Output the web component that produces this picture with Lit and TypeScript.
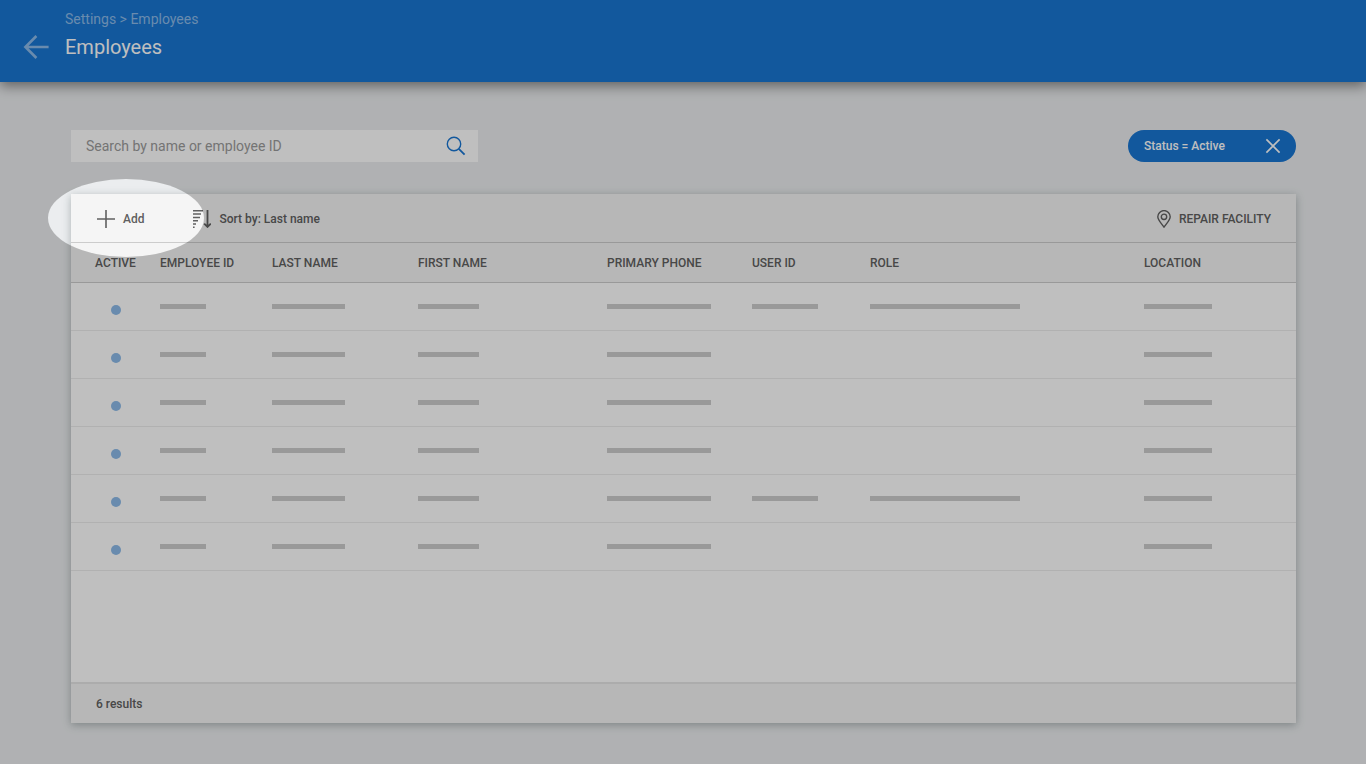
import { LitElement, html, css, svg } from "lit";
import { customElement, state } from "lit/decorators.js";
import { classMap } from "lit/directives/class-map.js";

interface Column {
  key: string;
  label: string;
}

interface Employee {
  active: boolean;
  hasUser: boolean;
}

const COLUMNS: Column[] = [
  { key: "active", label: "ACTIVE" },
  { key: "employee-id", label: "EMPLOYEE ID" },
  { key: "last-name", label: "LAST NAME" },
  { key: "first-name", label: "FIRST NAME" },
  { key: "phone", label: "PRIMARY PHONE" },
  { key: "user-id", label: "USER ID" },
  { key: "role", label: "ROLE" },
  { key: "location", label: "LOCATION" },
];

const EMPLOYEES: Employee[] = [
  { active: true, hasUser: true },
  { active: true, hasUser: false },
  { active: true, hasUser: false },
  { active: true, hasUser: false },
  { active: true, hasUser: true },
  { active: true, hasUser: false },
];

const icon = (size: number, body: unknown) => html`
  <svg width=${size} height=${size} viewBox="0 0 ${size} ${size}" fill="none" stroke="currentColor" aria-hidden="true">
    ${body}
  </svg>
`;

const backIcon = () => icon(26, svg`<path d="M13.4 2 2.400 13l11 11M2.400 13h23.200" stroke-width="2.6" />`);
const searchIcon = () =>
  icon(20, svg`<circle cx="8" cy="8" r="6.7" stroke-width="1.4" /><path d="M12.8 12.8 18.6 18.6" stroke-width="1.8" />`);
const closeIcon = () => icon(16, svg`<path d="M1.4 1.4 14.6 14.6M14.6 1.4 1.4 14.6" stroke-width="1.6" />`);
const plusIcon = () => icon(18, svg`<path d="M9 0v18M0 9h18" stroke-width="1.6" />`);
const sortIcon = () =>
  icon(
    18,
    svg`<path d="M0 .8h10M0 4.1h8M0 7.400h7M0 10.700h5M0 14h3M0 17.200h1.600" stroke-width="1.500" />
      <path d="M14.5 0v16.6M11.2 13.6l3.3 3.3 3.3-3.3" stroke-width="1.8" />`
  );
const pinIcon = () =>
  icon(
    18,
    svg`<path d="M9 17.2C6.2 13.2 2.8 10 2.8 6.8a6.2 6.2 0 0 1 12.4 0C15.200 10 11.800 13.200 9 17.200Z" stroke-width="1.4" />
      <circle cx="9" cy="6.800" r="2.700" stroke-width="1.400" />`
  );

@customElement("employee-table")
class EmployeeTable extends LitElement {
  static properties = { rows: { attribute: false } };

  declare rows: Employee[];

  constructor() {
    super();
    this.rows = [];
  }

  static styles = css`
    :host {
      display: block;
    }
    table {
      width: 100%;
      table-layout: fixed;
      border-collapse: separate;
      border-spacing: 0;
    }
    th,
    td {
      box-sizing: border-box;
      padding: 0;
      text-align: left;
    }
    th {
      height: 40px;
      background: #f5f5f5;
      border-bottom: 1px solid #cccccc;
      color: #606060;
      font-size: 12px;
      font-weight: 500;
      white-space: nowrap;
    }
    td {
      height: 48px;
      padding-top: 21px;
      border-bottom: 1px solid #ececec;
      vertical-align: top;
    }
    .active {
      width: 89px;
      text-align: center;
    }
    .employee-id {
      width: 112px;
    }
    .last-name {
      width: 146px;
    }
    .first-name {
      width: 189px;
    }
    .phone {
      width: 145px;
    }
    .user-id {
      width: 118px;
    }
    .location {
      width: 152px;
    }
    .dot {
      display: block;
      width: 10px;
      height: 10px;
      margin: 1px auto 0;
      border-radius: 50%;
      background: #8cbae8;
    }
    .bar {
      display: block;
      height: 5px;
      background: #cccccc;
    }
    .bar.employee-id {
      width: 46px;
    }
    .bar.last-name {
      width: 73px;
    }
    .bar.first-name {
      width: 61px;
    }
    .bar.phone {
      width: 104px;
    }
    .bar.user-id {
      width: 66px;
    }
    .bar.role {
      width: 150px;
    }
    .bar.location {
      width: 68px;
    }
  `;

  private cell(column: Column, row: Employee) {
    if (column.key === "active") {
      return row.active ? html`<span class="dot" role="img" aria-label="Active"></span>` : null;
    }
    const needsUser = column.key === "user-id" || column.key === "role";
    return needsUser && !row.hasUser ? null : html`<span class=${classMap({ bar: true, [column.key]: true })}></span>`;
  }

  render() {
    return html`
      <table>
        <thead>
          <tr>
            ${COLUMNS.map((c) => html`<th scope="col" class=${c.key}>${c.label}</th>`)}
          </tr>
        </thead>
        <tbody>
          ${this.rows.map(
            (row) => html`<tr>
              ${COLUMNS.map((c) => html`<td>${this.cell(c, row)}</td>`)}
            </tr>`
          )}
        </tbody>
      </table>
    `;
  }
}

@customElement("app-root")
class AppRoot extends LitElement {
  @state() private filtered = true;

  static styles = css`
    :host {
      display: flex;
      flex-direction: column;
      position: relative;
      min-height: 100vh;
      overflow: hidden;
      background: #ebedef;
      color: #606060;
      font-family: Roboto, "Liberation Sans", sans-serif;
    }
    svg {
      display: block;
      flex: none;
    }
    button,
    input {
      margin: 0;
      padding: 0;
      border: 0;
      background: none;
      color: inherit;
      font: inherit;
    }
    button {
      display: flex;
      align-items: center;
      gap: 8px;
      cursor: pointer;
    }
    header {
      display: flex;
      align-items: center;
      gap: 16px;
      box-sizing: border-box;
      height: 82px;
      padding: 0 24px 0 23px;
      background: #1976d2;
      box-shadow: 0 4px 12px rgba(0, 0, 0, 0.45);
      color: #ffffff;
    }
    .back {
      margin-top: 12px;
      color: #8cbae8;
    }
    .heading {
      display: flex;
      flex-direction: column;
      gap: 6px;
      padding-bottom: 14px;
    }
    .crumbs {
      color: #8cbae8;
      font-size: 14px;
      line-height: 20px;
    }
    .crumbs a {
      color: inherit;
      text-decoration: none;
    }
    h1 {
      margin: 0;
      font-size: 20px;
      font-weight: 400;
      line-height: 24px;
    }
    main {
      flex: 1;
      display: flex;
      flex-direction: column;
      gap: 32px;
      padding: 48px 70px 41px 71px;
    }
    .filters {
      display: flex;
      justify-content: space-between;
      align-items: center;
    }
    .search {
      display: flex;
      align-items: center;
      box-sizing: border-box;
      width: 407px;
      height: 32px;
      padding: 0 12px 0 15px;
      background: #ffffff;
    }
    .search input {
      flex: 1;
      height: 100%;
      outline: none;
      font-size: 14px;
    }
    .search input::placeholder {
      color: #9b9b9b;
      opacity: 1;
    }
    .search button {
      color: #1976d2;
    }
    .chip {
      justify-content: space-between;
      box-sizing: border-box;
      width: 168px;
      height: 32px;
      padding: 0 15px 0 16px;
      border-radius: 16px;
      background: #1976d2;
      color: #ffffff;
      font-size: 12px;
      font-weight: 500;
    }
    .card {
      flex: 1;
      display: flex;
      flex-direction: column;
      background: #ffffff;
      box-shadow: 0 2px 8px rgba(50, 70, 70, 0.35);
      font-size: 12px;
      font-weight: 500;
    }
    .toolbar {
      position: relative;
      display: flex;
      align-items: center;
      gap: 49px;
      box-sizing: border-box;
      height: 49px;
      padding: 2px 25px 0 26px;
      background: #f5f5f5;
      border-bottom: 1px solid #cccccc;
    }
    .facility {
      gap: 6px;
      margin-left: auto;
    }
    employee-table {
      flex: 1;
    }
    footer {
      box-sizing: border-box;
      height: 41px;
      padding: 0 25px;
      border-top: 2px solid #e6e6e6;
      background: #f5f5f5;
      line-height: 40px;
    }
    /* Tour spotlight: the oval stays clear and its spread shadow dims the rest of the page. */
    .spotlight {
      position: absolute;
      z-index: 10;
      left: -23px;
      top: -15px;
      width: 156px;
      height: 78px;
      border-radius: 50%;
      box-shadow: 0 0 0 3000px rgba(0, 0, 0, 0.25);
      pointer-events: none;
    }
  `;

  render() {
    return html`
      <header>
        <button class="back" aria-label="Back">${backIcon()}</button>
        <div class="heading">
          <nav class="crumbs" aria-label="Breadcrumb"><a href="#settings">Settings</a> &gt; <a href="#employees">Employees</a></nav>
          <h1>Employees</h1>
        </div>
      </header>
      <main>
        <div class="filters">
          <form class="search" role="search" @submit=${(e: Event) => e.preventDefault()}>
            <input type="text" aria-label="Search by name or employee ID" placeholder="Search by name or employee ID" />
            <button aria-label="Search">${searchIcon()}</button>
          </form>
          ${this.filtered
            ? html`<button class="chip" @click=${() => (this.filtered = false)}><span>Status = Active</span>${closeIcon()}</button>`
            : null}
        </div>
        <section class="card" aria-label="Employees">
          <div class="toolbar">
            <button>${plusIcon()}<span>Add</span></button>
            <button>${sortIcon()}<span>Sort by: Last name</span></button>
            <button class="facility">${pinIcon()}<span>REPAIR FACILITY</span></button>
            <div class="spotlight"></div>
          </div>
          <employee-table .rows=${EMPLOYEES}></employee-table>
          <footer>${EMPLOYEES.length} results</footer>
        </section>
      </main>
    `;
  }
}
